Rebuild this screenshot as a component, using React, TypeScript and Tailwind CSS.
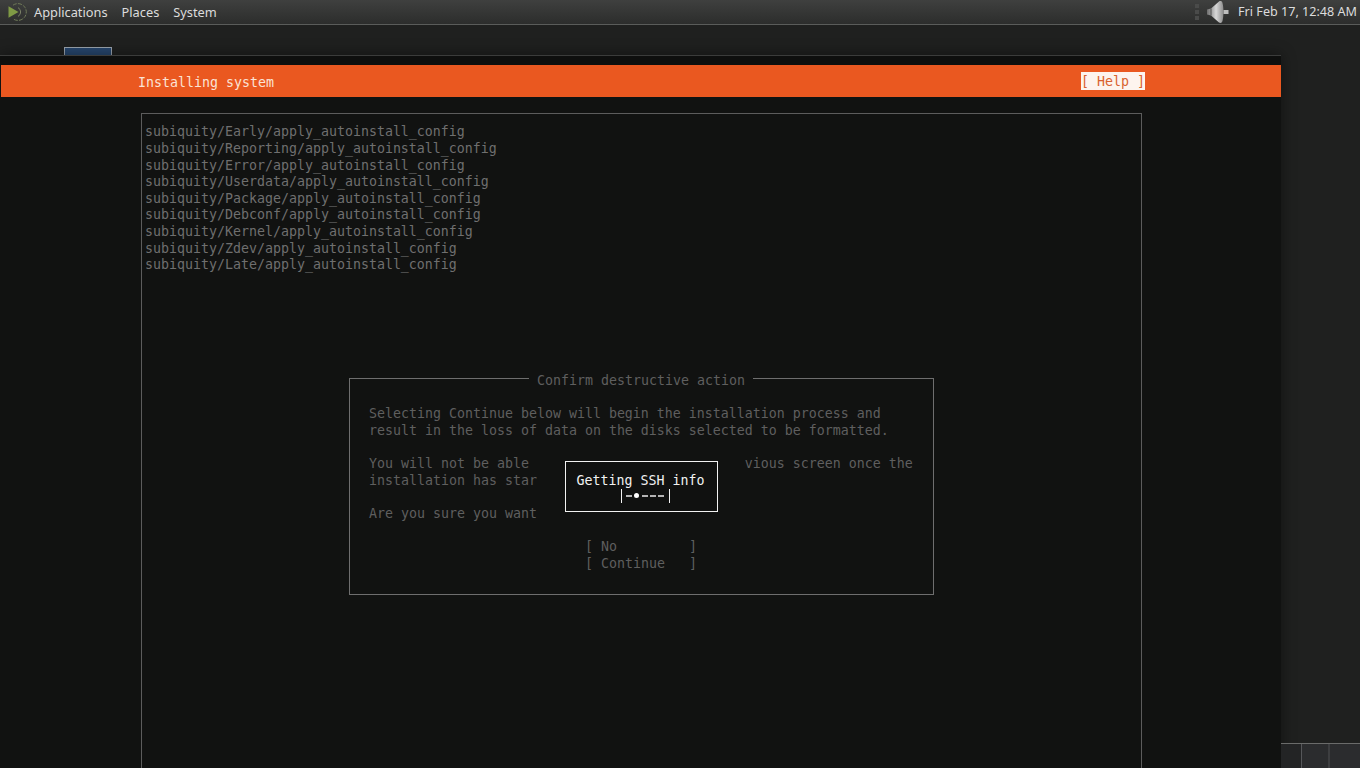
import React from 'react';

const logLines = [
    'subiquity/Early/apply_autoinstall_config',
    'subiquity/Reporting/apply_autoinstall_config',
    'subiquity/Error/apply_autoinstall_config',
    'subiquity/Userdata/apply_autoinstall_config',
    'subiquity/Package/apply_autoinstall_config',
    'subiquity/Debconf/apply_autoinstall_config',
    'subiquity/Kernel/apply_autoinstall_config',
    'subiquity/Zdev/apply_autoinstall_config',
    'subiquity/Late/apply_autoinstall_config',
];

function MateLogo() {
    return (
        <svg width="20" height="20" viewBox="0 0 20 20" fill="none">
            <path d="M6 3.2A8.4 8.4 0 1 1 6 16.8" stroke="#6f7a58" strokeWidth="1" strokeDasharray="4 1.2" />
            <path d="M11 5.6A5 5 0 0 1 11 14.4" stroke="#7a8066" strokeWidth="1" />
            <path d="M1.5 4.2L11.5 10L1.5 15.8Z" fill="#7f9a45" />
        </svg>
    );
}

function SpeakerIcon() {
    return (
        <svg width="24" height="24" viewBox="0 0 24 24">
            <defs>
                <linearGradient id="cone" x1="0" x2="1" y1="0" y2="0">
                    <stop offset="0" stopColor="#6d6d6d" />
                    <stop offset="0.55" stopColor="#d8d8d8" />
                    <stop offset="1" stopColor="#8b8b8b" />
                </linearGradient>
            </defs>
            <path d="M1 9.5L5 8.5L13 1.5C14.5 0.5 16 1 16.5 3C17.8 8 17.8 16 16.5 21C16 23 14.5 23.5 13 22.5L5 15.5L1 14.5Z" fill="url(#cone)" />
            <path d="M5 8.5L5 15.5" stroke="#4c4c4c" strokeWidth="1" />
            <rect x="17.5" y="10" width="5" height="4" fill="#bdbdbd" />
        </svg>
    );
}

function TopPanel() {
    return (
        <div className="flex h-[25px] shrink-0 items-center justify-between border-b border-[#5a5c5a] bg-gradient-to-b from-[#3f403f] to-[#2c2d2c] font-['Noto_Sans',sans-serif] text-[12.8px] text-[#dcdcdc]">
            <div className="flex items-center">
                <div className="ml-[7px] mr-[7px]">
                    <MateLogo />
                </div>
                <span className="pt-px">Applications</span>
                <span className="ml-[14px] pt-px">Places</span>
                <span className="ml-[14px] pt-px">System</span>
            </div>
            <div className="flex items-center">
                <div className="mr-[7px] flex flex-col gap-[2px]">
                    <div className="h-[4px] w-[4px] bg-[#4a4b4a]" />
                    <div className="h-[4px] w-[4px] bg-[#4a4b4a]" />
                    <div className="h-[4px] w-[4px] bg-[#4a4b4a]" />
                </div>
                <div className="mr-[8px]">
                    <SpeakerIcon />
                </div>
                <span className="mr-[3px] pt-px text-[12.6px]">Fri Feb 17, 12:48 AM</span>
            </div>
        </div>
    );
}

function ConfirmDialog() {
    return (
        <div className="absolute left-[207px] top-[264px] h-[217px] w-[585px] border border-[#6e6e6e] bg-[#111211] px-[19px] pt-[27.4px] text-[#5f5f5f]">
            <div className="absolute left-[179px] top-[-6px] bg-[#111211] px-[8px]">Confirm destructive action</div>
            <div className="whitespace-pre">{'Selecting Continue below will begin the installation process and'}</div>
            <div className="whitespace-pre">{'result in the loss of data on the disks selected to be formatted.'}</div>
            <div className="h-[16.6px]" />
            <div className="whitespace-pre">{'You will not be able to return to this or a previous screen once the'}</div>
            <div className="whitespace-pre">{'installation has started.'}</div>
            <div className="h-[16.6px]" />
            <div className="whitespace-pre">{'Are you sure you want to continue?'}</div>
            <div className="h-[16.6px]" />
            <div className="whitespace-pre pl-[216px]">{'[ No         ]'}</div>
            <div className="whitespace-pre pl-[216px]">{'[ Continue   ]'}</div>

            {/* progress popup wipes the dialog text behind it */}
            <div className="absolute left-[187px] top-[76px] flex h-[67px] w-[208px] items-start justify-center bg-[#111211] pt-[6px]">
                <div className="h-[51px] w-[153px] border-[1.5px] border-[#f2f2f2] bg-[#101110] pl-[11px] pt-[11px] text-[#f2f2f2]">
                    <div className="whitespace-pre">Getting SSH info</div>
                    <div className="-mt-[2px] flex h-[16.6px] items-center pl-[44px]">
                        <div className="h-[14px] w-px bg-[#f2f2f2]" />
                        <div className="ml-[4px] h-[2px] w-[6px] bg-[#b4b4b4]" />
                        <div className="ml-[2px] h-[5px] w-[5px] rounded-full bg-white" />
                        <div className="ml-[3px] h-[2px] w-[6px] bg-[#b4b4b4]" />
                        <div className="ml-[2px] h-[2px] w-[6px] bg-[#b4b4b4]" />
                        <div className="ml-[2px] h-[2px] w-[6px] bg-[#b4b4b4]" />
                        <div className="ml-[5px] h-[14px] w-px bg-[#f2f2f2]" />
                    </div>
                </div>
            </div>
        </div>
    );
}

function InstallerWindow() {
    return (
        <div className="flex w-[1281px] flex-col">
            <div className="h-[22px] shrink-0 pl-[64px] pt-[22px]">
                <div className="h-[8px] w-[48px] border border-b-0 border-[#9aa3ad] bg-[#27476e]" />
            </div>
            <div className="mt-[8px] flex flex-1 flex-col border-t border-[#3b3c3b] bg-[#111211] font-['DejaVu_Sans_Mono',monospace] text-[13.29px] leading-[16.6px] shadow-[0_0_14px_rgba(0,0,0,0.45)]">
                <div className="h-[9px] shrink-0 bg-[#0e0f0e]" />
                <div className="ml-px flex h-[32px] shrink-0 items-center justify-between bg-[#ea5820] pl-[137px] pr-[136px] text-[#fbe3d6]">
                    <span className="pt-[4px]">Installing system</span>
                    <span className="h-[18px] whitespace-pre bg-[#fdf4ee] pt-[2px] text-[#d9622f]">{'[ Help ]'}</span>
                </div>
                <div className="flex-1 pl-[141px] pt-[16px]">
                    <div className="relative h-full w-[1001px] border-x border-t border-[#5c5c5c] pl-[3px] pt-[10.4px] text-[#6f6f6f]">
                        {logLines.map((line) => (
                            <div key={line} className="whitespace-pre">
                                {line}
                            </div>
                        ))}
                        <ConfirmDialog />
                    </div>
                </div>
            </div>
        </div>
    );
}

function BottomPanel() {
    return (
        <div className="flex h-[25px] shrink-0 border-t border-[#6a6b6a] bg-[#2b2c2e]">
            <div className="w-[21px] border-r border-[#56575a] bg-[#232425]" />
            <div className="w-[28px] border-r-[2px] border-[#3d3e40]" />
            <div className="flex-1" />
        </div>
    );
}

export default function App() {
    return (
        <div className="flex h-[768px] w-[1360px] flex-col overflow-hidden bg-[#1f201f]">
            <TopPanel />
            <div className="flex min-h-0 flex-1">
                <InstallerWindow />
                <div className="flex flex-1 flex-col justify-end">
                    <BottomPanel />
                </div>
            </div>
        </div>
    );
}
